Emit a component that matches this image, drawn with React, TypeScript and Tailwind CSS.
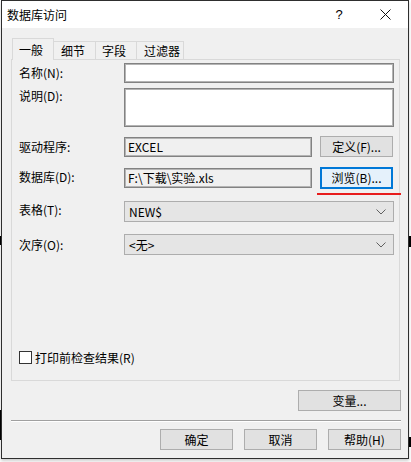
import React from "react";

const font = { fontFamily: '"Noto Sans CJK SC", "Noto Sans", sans-serif' };

function Chevron() {
  return (
    <svg width="10" height="6" viewBox="0 0 10 6" className="shrink-0">
      <polyline points="0.5,0.5 5,5 9.5,0.5" fill="none" stroke="#606060" strokeWidth="1" />
    </svg>
  );
}

function Select({ value }: { value: string }) {
  return (
    <div className="w-[270px] h-[21px] border border-[#adadad] bg-[#e5e5e5] flex items-center justify-between pl-[4px] pr-[7px] text-[12px] text-black leading-none">
      <span>{value}</span>
      <Chevron />
    </div>
  );
}

function Btn({ children, w, focused }: { children: React.ReactNode; w: string; focused?: boolean }) {
  return (
    <div
      className={
        "h-[21px] flex items-center justify-center text-[12px] leading-none text-black " +
        w +
        (focused ? " border-2 border-[#0078d7] bg-[#e5f1fb]" : " border border-[#adadad] bg-[#e1e1e1]")
      }
    >
      {children}
    </div>
  );
}

function Label({ children }: { children: React.ReactNode }) {
  return <div className="w-[105px] shrink-0 text-[12px] leading-none text-black">{children}</div>;
}

function ReadInput({ value, w }: { value: string; w: string }) {
  return (
    <div className={"h-[20px] border border-[#828282] shadow-[inset_0_0_0_1px_#b4b4b4] bg-[#f0f0f0] flex items-center pl-[3px] text-[12px] leading-none text-black " + w}>
      {value}
    </div>
  );
}

export default function App() {
  return (
    <div className="relative w-[411px] h-[462px] bg-white overflow-hidden" style={font}>
      <div className="absolute left-0 top-[236px] w-[2px] h-[9px] bg-black" />
      <div className="absolute left-0 top-[410px] w-[2px] h-[30px] bg-black" />
      <div className="absolute right-0 top-[236px] w-[3px] h-[11px] bg-black" />
      <div className="absolute right-0 top-[437px] w-[3px] h-[10px] bg-black" />
      <div className="relative ml-[1px] w-[408px] h-[459px] border border-[#2e2e2e] bg-[#f0f0f0] flex flex-col shadow-[0_2px_3px_rgba(0,0,0,0.2)]">
        {/* title bar */}
        <div className="h-[27px] bg-white flex items-center shrink-0">
          <div className="pl-[5px] text-[12px] leading-none text-black flex-1">数据库访问</div>
          <div className="w-[46px] h-full flex items-center justify-center text-[13px] text-black" style={{ fontFamily: '"Liberation Sans", sans-serif' }}>?</div>
          <div className="w-[46px] h-full flex items-center justify-center">
            <svg width="11" height="11" viewBox="0 0 11 11">
              <path d="M0.5 0.5 L10.5 10.5 M10.5 0.5 L0.5 10.5" stroke="#111" strokeWidth="1" />
            </svg>
          </div>
        </div>

        {/* tabs */}
        <div className="relative z-10 mt-[10px] ml-[10px] h-[22px] flex items-end -mb-[1px]">
          <div className="w-[42px] h-[22px] bg-[#f0f0f0] border border-[#d9d9d9] border-b-0 flex items-center pl-[6px] text-[12px] leading-none text-black">一般</div>
          <div className="w-[42px] h-[19px] bg-[#f0f0f0] border border-[#d9d9d9] border-l-0 border-b-[#d9d9d9] flex items-center pl-[7px] text-[12px] leading-none text-black">细节</div>
          <div className="w-[41px] h-[19px] bg-[#f0f0f0] border border-[#d9d9d9] border-l-0 flex items-center pl-[6px] text-[12px] leading-none text-black">字段</div>
          <div className="w-[47px] h-[19px] bg-[#f0f0f0] border border-[#d9d9d9] border-l-0 flex items-center pl-[7px] text-[12px] leading-none text-black">过滤器</div>
        </div>

        {/* panel */}
        <div className="relative ml-[9px] w-[389px] h-[322px] border border-[#d9d9d9] flex flex-col pl-[7px] shrink-0">
          <div className="mt-[3px] flex items-start">
            <Label><div className="pt-[4px]">名称(N):</div></Label>
            <div className="w-[270px] h-[20px] border border-[#828282] shadow-[inset_0_0_0_1px_#b4b4b4] bg-white" />
          </div>
          <div className="mt-[5px] flex items-start">
            <Label><div className="pt-[2px]">说明(D):</div></Label>
            <div className="w-[270px] h-[39px] border border-[#828282] shadow-[inset_0_0_0_1px_#b4b4b4] bg-white" />
          </div>
          <div className="mt-[9px] flex items-center h-[21px]">
            <Label>驱动程序:</Label>
            <ReadInput value="EXCEL" w="w-[188px]" />
            <div className="ml-[8px]"><Btn w="w-[73px]">定义(F)...</Btn></div>
          </div>
          <div className="mt-[10px] flex items-center h-[22px]">
            <Label><div className="-mt-[2px]">数据库(D):</div></Label>
            <ReadInput value="F:\下载\实验.xls" w="w-[188px]" />
            <div className="ml-[8px]">
              <div className="w-[73px] h-[22px] border-2 border-[#0078d7] bg-[#e5f1fb] flex items-center justify-center text-[12px] leading-none text-black">浏览(B)...</div>
            </div>
          </div>
          <div className="mt-[12px] flex items-center h-[21px]">
            <Label><div className="-mt-[3px]">表格(T):</div></Label>
            <Select value="NEW$" />
          </div>
          <div className="mt-[12px] flex items-center h-[21px]">
            <Label>次序(O):</Label>
            <Select value="<无>" />
          </div>
          <div className="mt-auto mb-[16px] flex items-center">
            <div className="w-[13px] h-[13px] border border-[#333] bg-white" />
            <div className="ml-[3px] text-[12px] leading-none text-black">打印前检查结果(R)</div>
          </div>
          <div className="absolute left-[305px] top-[133px] w-[84px] h-[2px] bg-[#e81c1c]" />
        </div>

        {/* variable button */}
        <div className="mt-[9px] flex justify-end pr-[7px]">
          <Btn w="w-[103px]">变量...</Btn>
        </div>

        {/* separator */}
        <div className="mt-[9px] ml-[9px] mr-[7px] h-[2px] border-t border-[#a0a0a0] border-b border-b-white" />

        {/* bottom buttons */}
        <div className="mt-[7px] flex justify-end pr-[7px] gap-[11px]">
          <Btn w="w-[73px]">确定</Btn>
          <Btn w="w-[73px]">取消</Btn>
          <Btn w="w-[73px]">帮助(H)</Btn>
        </div>
      </div>
    </div>
  );
}
